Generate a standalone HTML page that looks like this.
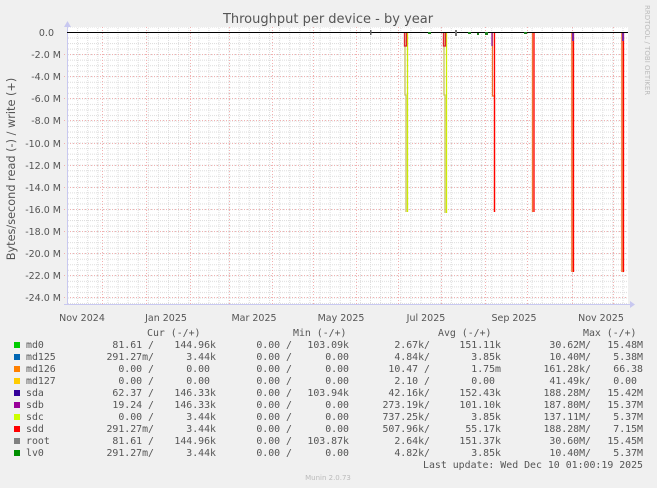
<!DOCTYPE html>
<html><head><meta charset="utf-8"><style>
html,body{margin:0;padding:0;background:#f0f0f0;}
svg{display:block;}
.m{font-family:"DejaVu Sans Mono","Liberation Mono",monospace;font-size:9.9px;fill:#555;}
.s{font-family:"DejaVu Sans","Liberation Sans",sans-serif;font-size:9.5px;fill:#555;}
</style></head><body>
<svg width="657" height="488" viewBox="0 0 657 488" xmlns="http://www.w3.org/2000/svg">
<defs>
<pattern id="vg" x="67" y="0" width="10.1" height="488" patternUnits="userSpaceOnUse">
<line x1="0.5" y1="0" x2="0.5" y2="488" stroke="#ddd" stroke-dasharray="1,1"/>
</pattern>
<pattern id="hg" x="0" y="32" width="657" height="5.53" patternUnits="userSpaceOnUse">
<line x1="0" y1="0.5" x2="657" y2="0.5" stroke="#ddd" stroke-dasharray="1,1"/>
</pattern>
</defs>
<rect width="657" height="488" fill="#f0f0f0"/>
<rect x="67" y="27" width="561" height="277" fill="#fff"/>
<rect x="67" y="27" width="561" height="277" fill="url(#vg)"/>
<rect x="67" y="27" width="561" height="277" fill="url(#hg)"/>
<g stroke="#f2b0b0" stroke-dasharray="1,2">
<line x1="102.5" y1="27" x2="102.5" y2="304"/><line x1="146.5" y1="27" x2="146.5" y2="304"/>
<line x1="190.5" y1="27" x2="190.5" y2="304"/><line x1="229.5" y1="27" x2="229.5" y2="304"/>
<line x1="272.5" y1="27" x2="272.5" y2="304"/><line x1="313.5" y1="27" x2="313.5" y2="304"/>
<line x1="356.5" y1="27" x2="356.5" y2="304"/><line x1="398.5" y1="27" x2="398.5" y2="304"/>
<line x1="441.5" y1="27" x2="441.5" y2="304"/><line x1="485.5" y1="27" x2="485.5" y2="304"/>
<line x1="527.5" y1="27" x2="527.5" y2="304"/><line x1="572.5" y1="27" x2="572.5" y2="304"/>
<line x1="613.5" y1="27" x2="613.5" y2="304"/>
<line x1="64" y1="54.5" x2="628" y2="54.5"/><line x1="64" y1="76.5" x2="628" y2="76.5"/>
<line x1="64" y1="98.5" x2="628" y2="98.5"/><line x1="64" y1="120.5" x2="628" y2="120.5"/>
<line x1="64" y1="143.5" x2="628" y2="143.5"/><line x1="64" y1="165.5" x2="628" y2="165.5"/>
<line x1="64" y1="187.5" x2="628" y2="187.5"/><line x1="64" y1="209.5" x2="628" y2="209.5"/>
<line x1="64" y1="231.5" x2="628" y2="231.5"/><line x1="64" y1="253.5" x2="628" y2="253.5"/>
<line x1="64" y1="275.5" x2="628" y2="275.5"/><line x1="64" y1="297.5" x2="628" y2="297.5"/>
</g>
<line x1="67.5" y1="24" x2="67.5" y2="305" stroke="#c8c8f0"/>
<polygon points="64,27 71,27 67.5,21" fill="#c8c8f0"/>
<line x1="64" y1="304.5" x2="631" y2="304.5" stroke="#c8c8f0"/>
<polygon points="630,301 630,308 635,304.5" fill="#c8c8f0"/>
<line x1="67" y1="32.5" x2="628" y2="32.5" stroke="#000" stroke-width="1"/>
<g stroke-width="1.3" fill="none">
<polyline points="405,33 405,95 406,95 406,212" stroke="#c8c060"/>
<polyline points="407.5,33 407.5,212" stroke="#ccee00"/>
<polyline points="404.5,33 404.5,46 406.5,46 406.5,33" stroke="#e02030"/>
<polyline points="444,33 444,95 445,95 445,213" stroke="#c8c060"/>
<polyline points="446.5,33 446.5,213" stroke="#ccee00"/>
<polyline points="443.5,33 443.5,46 445.5,46 445.5,33" stroke="#e02030"/>
<polyline points="492.5,33 492.5,96 494.5,96 494.5,212" stroke="#f07030"/>
<polyline points="494.5,33 494.5,212" stroke="#ff0000"/>
<polyline points="492,33 492,46" stroke="#9020a0"/>
<polyline points="532.5,33 532.5,212" stroke="#f07030"/>
<polyline points="534,33 534,212" stroke="#ff0000"/>
<polyline points="572,33 572,272" stroke="#f07030" stroke-width="1.6"/>
<polyline points="573.5,33 573.5,272" stroke="#ff0000"/>
<polyline points="573,33 573,41" stroke="#8020a0" stroke-width="2"/>
<polyline points="622,33 622,272" stroke="#f07030" stroke-width="1.6"/>
<polyline points="623.5,33 623.5,272" stroke="#ff0000"/>
<polyline points="623,33 623,41" stroke="#8020a0" stroke-width="2"/>
</g>
<g fill="#208020"><rect x="428" y="32" width="3" height="2"/><rect x="468" y="32" width="3" height="2"/><rect x="477" y="33" width="2" height="2"/><rect x="485" y="32" width="3" height="3"/><rect x="524" y="32" width="3" height="2"/></g>
<rect x="370" y="30" width="1.5" height="5" fill="#666"/><rect x="455" y="30" width="2" height="6" fill="#777"/>
<text x="328" y="23" text-anchor="middle" font-family="DejaVu Sans,Liberation Sans,sans-serif" font-size="13" fill="#555">Throughput per device - by year</text>
<g class="s" text-anchor="end">
<text x="54" y="36">0.0</text><text x="61" y="58">-2.0 M</text><text x="61" y="80">-4.0 M</text>
<text x="61" y="102">-6.0 M</text><text x="61" y="124">-8.0 M</text><text x="61" y="147">-10.0 M</text>
<text x="61" y="169">-12.0 M</text><text x="61" y="191">-14.0 M</text><text x="61" y="213">-16.0 M</text>
<text x="61" y="235">-18.0 M</text><text x="61" y="257">-20.0 M</text><text x="61" y="279">-22.0 M</text>
<text x="61" y="301">-24.0 M</text>
</g>
<g class="s" text-anchor="middle">
<text x="82" y="321">Nov 2024</text><text x="166" y="321">Jan 2025</text><text x="254" y="321">Mar 2025</text>
<text x="341" y="321">May 2025</text><text x="426" y="321">Jul 2025</text><text x="514" y="321">Sep 2025</text>
<text x="601" y="321">Nov 2025</text>
</g>
<text transform="translate(15,169) rotate(-90)" text-anchor="middle" font-family="DejaVu Sans,Liberation Sans,sans-serif" font-size="11.3" fill="#555">Bytes/second read (-) / write (+)</text>
<text transform="translate(645,5) rotate(90)" font-family="DejaVu Sans,sans-serif" font-size="7" fill="#bbb">RRDTOOL / TOBI OETIKER</text>
<g class="m">
<text x="147" y="336">Cur (-/+)</text><text x="293" y="336">Min (-/+)</text>
<text x="438" y="336">Avg (-/+)</text><text x="583" y="336">Max (-/+)</text>
</g>
<g>
<rect x="14" y="342" width="6" height="6" fill="#00cc00"/>
<rect x="14" y="354" width="6" height="6" fill="#0066b3"/>
<rect x="14" y="366" width="6" height="6" fill="#ff8000"/>
<rect x="14" y="378" width="6" height="6" fill="#ffcc00"/>
<rect x="14" y="390" width="6" height="6" fill="#330099"/>
<rect x="14" y="402" width="6" height="6" fill="#990099"/>
<rect x="14" y="414" width="6" height="6" fill="#ccff00"/>
<rect x="14" y="426" width="6" height="6" fill="#ff0000"/>
<rect x="14" y="438" width="6" height="6" fill="#808080"/>
<rect x="14" y="450" width="6" height="6" fill="#008f00"/>
</g>
<g class="m">
<text x="26" y="348">md0</text><text x="26" y="360">md125</text><text x="26" y="372">md126</text>
<text x="26" y="384">md127</text><text x="26" y="396">sda</text><text x="26" y="408">sdb</text>
<text x="26" y="420">sdc</text><text x="26" y="432">sdd</text><text x="26" y="444">root</text><text x="26" y="456">lv0</text>
</g>
<g class="m" text-anchor="end">
<text x="154" y="348">81.61 /</text><text x="216" y="348">144.96k</text><text x="292" y="348">0.00 /</text><text x="349" y="348">103.09k</text><text x="430" y="348">2.67k/</text><text x="501" y="348">151.11k</text><text x="591" y="348">30.62M/</text><text x="643" y="348">15.48M</text>
<text x="154" y="360">291.27m/</text><text x="216" y="360">3.44k</text><text x="292" y="360">0.00 /</text><text x="349" y="360">0.00</text><text x="430" y="360">4.84k/</text><text x="501" y="360">3.85k</text><text x="591" y="360">10.40M/</text><text x="643" y="360">5.38M</text>
<text x="154" y="372">0.00 /</text><text x="210" y="372">0.00</text><text x="292" y="372">0.00 /</text><text x="349" y="372">0.00</text><text x="430" y="372">10.47 /</text><text x="501" y="372">1.75m</text><text x="591" y="372">161.28k/</text><text x="643" y="372">66.38</text>
<text x="154" y="384">0.00 /</text><text x="210" y="384">0.00</text><text x="292" y="384">0.00 /</text><text x="349" y="384">0.00</text><text x="430" y="384">2.10 /</text><text x="495" y="384">0.00</text><text x="591" y="384">41.49k/</text><text x="637" y="384">0.00</text>
<text x="154" y="396">62.37 /</text><text x="216" y="396">146.33k</text><text x="292" y="396">0.00 /</text><text x="349" y="396">103.94k</text><text x="430" y="396">42.16k/</text><text x="501" y="396">152.43k</text><text x="591" y="396">188.28M/</text><text x="643" y="396">15.42M</text>
<text x="154" y="408">19.24 /</text><text x="216" y="408">146.33k</text><text x="292" y="408">0.00 /</text><text x="349" y="408">0.00</text><text x="430" y="408">273.19k/</text><text x="501" y="408">101.10k</text><text x="591" y="408">187.80M/</text><text x="643" y="408">15.37M</text>
<text x="154" y="420">0.00 /</text><text x="216" y="420">3.44k</text><text x="292" y="420">0.00 /</text><text x="349" y="420">0.00</text><text x="430" y="420">737.25k/</text><text x="501" y="420">3.85k</text><text x="591" y="420">137.11M/</text><text x="643" y="420">5.37M</text>
<text x="154" y="432">291.27m/</text><text x="216" y="432">3.44k</text><text x="292" y="432">0.00 /</text><text x="349" y="432">0.00</text><text x="430" y="432">507.96k/</text><text x="501" y="432">55.17k</text><text x="591" y="432">188.28M/</text><text x="643" y="432">7.15M</text>
<text x="154" y="444">81.61 /</text><text x="216" y="444">144.96k</text><text x="292" y="444">0.00 /</text><text x="349" y="444">103.87k</text><text x="430" y="444">2.64k/</text><text x="501" y="444">151.37k</text><text x="591" y="444">30.60M/</text><text x="643" y="444">15.45M</text>
<text x="154" y="456">291.27m/</text><text x="216" y="456">3.44k</text><text x="292" y="456">0.00 /</text><text x="349" y="456">0.00</text><text x="430" y="456">4.82k/</text><text x="501" y="456">3.85k</text><text x="591" y="456">10.40M/</text><text x="643" y="456">5.37M</text>
<text x="643" y="468">Last update: Wed Dec 10 01:00:19 2025</text>
</g>
<text x="328" y="480" text-anchor="middle" font-family="DejaVu Sans,sans-serif" font-size="7" fill="#bbb">Munin 2.0.73</text>
</svg>
</body></html>
